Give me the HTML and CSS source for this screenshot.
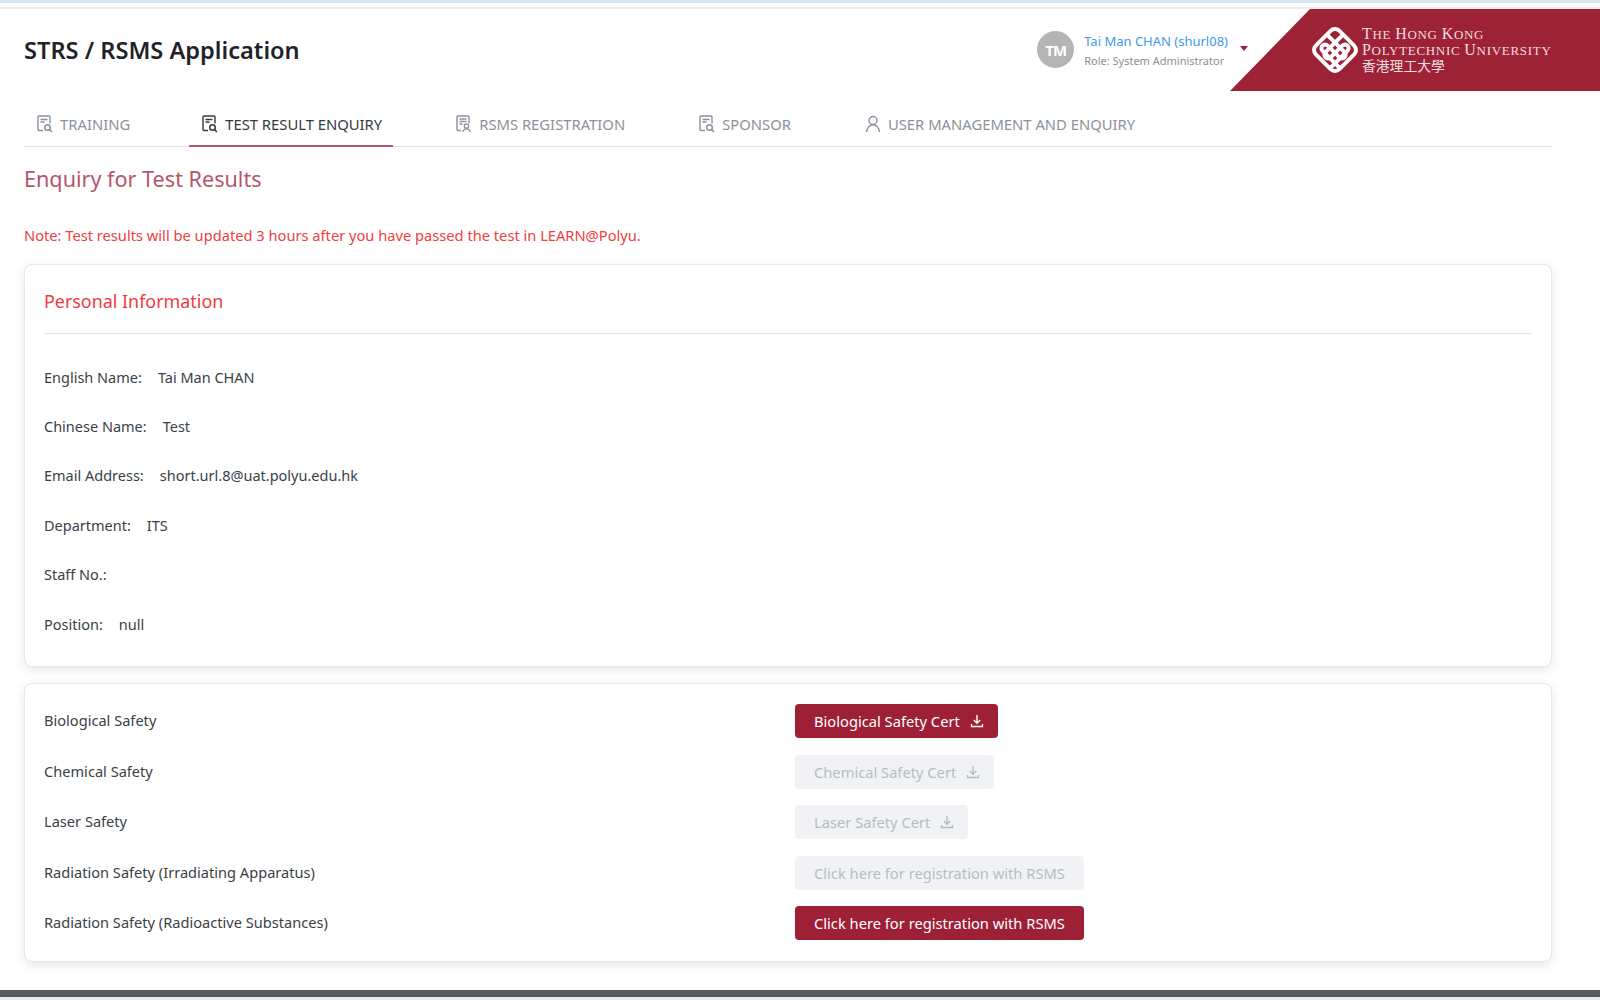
FILE: index.html
```html
<!DOCTYPE html>
<html lang="en">
<head>
    <meta charset="UTF-8">
    <title>STRS / RSMS Application</title>
    <link rel="stylesheet" href="styles.css">
</head>
<body>
    <svg class="icon-defs" width="0" height="0">
        <symbol id="doc-search" viewBox="0 0 16 18">
            <path d="M6 15.500H2a1 1 0 0 1-1-1V2a1 1 0 0 1 1-1h10a1 1 0 0 1 1 1v6.500" fill="none" stroke="currentColor" stroke-width="1.400"/>
            <path d="M3.500 4.500h7M3.500 7h4" fill="none" stroke="currentColor" stroke-width="1.400"/>
            <circle cx="10.500" cy="12.500" r="2.800" fill="none" stroke="currentColor" stroke-width="1.500"/>
            <path d="M12.600 14.600l2.400 2.400" fill="none" stroke="currentColor" stroke-width="1.500"/>
        </symbol>
        <symbol id="doc-user" viewBox="0 0 16 18">
            <path d="M5 15.500H2a1 1 0 0 1-1-1V2a1 1 0 0 1 1-1h10a1 1 0 0 1 1 1v6.500" fill="none" stroke="currentColor" stroke-width="1.400"/>
            <path d="M3.500 4h7M3.500 6.500h7M3.500 9h3" fill="none" stroke="currentColor" stroke-width="1.400"/>
            <circle cx="10.500" cy="11" r="2.200" fill="none" stroke="currentColor" stroke-width="1.300"/>
            <path d="M6.800 17c.3-2 1.800-3.200 3.700-3.200s3.400 1.200 3.700 3.200" fill="none" stroke="currentColor" stroke-width="1.300"/>
        </symbol>
        <symbol id="user" viewBox="0 0 16 18">
            <circle cx="8" cy="5.500" r="4" fill="none" stroke="currentColor" stroke-width="1.400"/>
            <path d="M1.500 17c.4-4 3-7.200 6.500-7.200s6.100 3.200 6.500 7.200" fill="none" stroke="currentColor" stroke-width="1.400"/>
        </symbol>
        <symbol id="download" viewBox="0 0 14 14">
            <path d="M7 1v8M3.800 6l3.200 3.200L10.200 6M1.500 10v2.500h11V10" fill="none" stroke="currentColor" stroke-width="1.400"/>
        </symbol>
    </svg>

    <div class="top-band"></div>

    <div class="page">
        <header class="app-header">
            <h1 class="app-title">STRS / RSMS Application</h1>
            <div class="user-box">
                <div class="avatar">TM</div>
                <div class="user-info">
                    <div class="user-name">Tai Man CHAN (shurl08)</div>
                    <div class="user-role">Role: System Administrator</div>
                </div>
                <span class="caret"></span>
            </div>
            <div class="brand">
                <svg class="brand-mark" viewBox="0 0 48 48">
                    <g fill="none" stroke="#fff" stroke-width="3.800" transform="rotate(45 24 24)">
                        <rect x="8" y="8" width="32" height="32" rx="6"/>
                        <path d="M8 19h24a3.500 3.500 0 0 1 0 7H16a3.500 3.500 0 0 0 0 7h24"/>
                        <path d="M19 8v24a3.500 3.500 0 0 0 7 0V16a3.500 3.500 0 0 1 7 0v24"/>
                    </g>
                </svg>
                <div class="brand-text">
                    <div><span class="brand-cap">T</span>HE <span class="brand-cap">H</span>ONG <span class="brand-cap">K</span>ONG</div>
                    <div><span class="brand-cap">P</span>OLYTECHNIC <span class="brand-cap">U</span>NIVERSITY</div>
                    <div class="brand-cjk">香港理工大學</div>
                </div>
            </div>
        </header>

        <nav class="tabs">
            <a class="tab"><svg class="tab-icon"><use href="#doc-search"/></svg>TRAINING</a>
            <a class="tab tab-active"><svg class="tab-icon"><use href="#doc-search"/></svg>TEST RESULT ENQUIRY</a>
            <a class="tab"><svg class="tab-icon"><use href="#doc-user"/></svg>RSMS REGISTRATION</a>
            <a class="tab"><svg class="tab-icon"><use href="#doc-search"/></svg>SPONSOR</a>
            <a class="tab"><svg class="tab-icon"><use href="#user"/></svg>USER MANAGEMENT AND ENQUIRY</a>
        </nav>

        <h2 class="page-title">Enquiry for Test Results</h2>
        <p class="note">Note: Test results will be updated 3 hours after you have passed the test in LEARN@Polyu.</p>

        <section class="card card-info">
            <h3 class="card-title">Personal Information</h3>
            <div class="info-list">
                <div class="info-row"><span class="info-label">English Name:</span><span>Tai Man CHAN</span></div>
                <div class="info-row"><span class="info-label">Chinese Name:</span><span>Test</span></div>
                <div class="info-row"><span class="info-label">Email Address:</span><span>short.url.8@uat.polyu.edu.hk</span></div>
                <div class="info-row"><span class="info-label">Department:</span><span>ITS</span></div>
                <div class="info-row"><span class="info-label">Staff No.:</span></div>
                <div class="info-row"><span class="info-label">Position:</span><span>null</span></div>
            </div>
        </section>

        <section class="card card-certs">
            <div class="cert-label">Biological Safety</div>
            <div><button class="btn">Biological Safety Cert<svg class="btn-icon"><use href="#download"/></svg></button></div>
            <div class="cert-label">Chemical Safety</div>
            <div><button class="btn btn-disabled">Chemical Safety Cert<svg class="btn-icon"><use href="#download"/></svg></button></div>
            <div class="cert-label">Laser Safety</div>
            <div><button class="btn btn-disabled">Laser Safety Cert<svg class="btn-icon"><use href="#download"/></svg></button></div>
            <div class="cert-label">Radiation Safety (Irradiating Apparatus)</div>
            <div><button class="btn btn-disabled">Click here for registration with RSMS</button></div>
            <div class="cert-label">Radiation Safety (Radioactive Substances)</div>
            <div><button class="btn">Click here for registration with RSMS</button></div>
        </section>
    </div>

    <div class="bottom-bar"></div>
    <div class="bottom-band"></div>
</body>
</html>
```

FILE: styles.css
```css
* {
    margin: 0;
    padding: 0;
    box-sizing: border-box;
}

html, body {
    height: 1000px;
    overflow: hidden;
}

body {
    font-family: "Noto Sans", "Open Sans", sans-serif;
    background: #fff;
    color: #333;
    font-size: 14.5px;
    display: flex;
    flex-direction: column;
}

.icon-defs {
    position: absolute;
}

.top-band {
    height: 3px;
    background: #d6e5f0;
    flex: none;
}

.page {
    flex: 1;
    margin-top: 4px;
    border-top: 2px solid #ececec;
    padding-left: 24px;
}

/* header */
.app-header {
    display: flex;
    align-items: center;
    height: 82px;
}

.app-title {
    font-size: 23.6px;
    font-weight: 600;
    color: #1f2329;
    flex: 1;
    margin-top: -1px;
}

.user-box {
    display: flex;
    align-items: center;
    margin-right: -18px;
    margin-top: -1px;
}

.avatar {
    width: 37px;
    height: 37px;
    border-radius: 50%;
    background: #b4b4b4;
    color: #fff;
    font-size: 15px;
    font-weight: 700;
    letter-spacing: -1px;
    display: flex;
    align-items: center;
    justify-content: center;
    margin-right: 10px;
}

.user-info {
    padding-top: 1px;
}

.user-name {
    color: #3d9be9;
    font-size: 13px;
    line-height: 18px;
}

.user-role {
    color: #8a8f96;
    font-size: 11px;
    line-height: 15px;
    margin-top: 3px;
}

.caret {
    width: 0;
    height: 0;
    border-left: 4.5px solid transparent;
    border-right: 4.5px solid transparent;
    border-top: 5px solid #a02137;
    margin-left: 12px;
    margin-top: -2px;
}

.brand {
    width: 370px;
    height: 82px;
    background: #9e2236;
    clip-path: polygon(80px 0, 100% 0, 100% 100%, 0 100%);
    display: flex;
    align-items: center;
    padding-left: 80px;
    color: #f1dde1;
}

.brand-mark {
    width: 50px;
    height: 50px;
    flex: none;
    margin-right: 2px;
}

.brand-text {
    font-family: "Liberation Serif", serif;
    font-size: 13px;
    letter-spacing: 0.7px;
    line-height: 14.5px;
    white-space: nowrap;
}

.brand-cap {
    font-size: 16px;
}

.brand-cjk {
    font-family: "Noto Sans CJK TC", sans-serif;
    font-size: 13.8px;
    letter-spacing: 0;
    line-height: 15px;
}

/* tabs */
.tabs {
    display: flex;
    margin-right: 48px;
    margin-top: 10px;
    border-bottom: 1px solid #e4e5ea;
    height: 46px;
}

.tab {
    display: flex;
    align-items: center;
    height: 46px;
    padding: 0 11px 0 13px;
    margin-right: 50px;
    color: #8b929c;
    font-size: 14.8px;
}

.tab:first-child {
    padding-left: 13px;
    margin-right: 48px;
}

.tab-active {
    color: #333a42;
    box-shadow: inset 0 -2px 0 #b4586a;
}

.tab-icon {
    width: 16px;
    height: 18px;
    margin-right: 7px;
}

/* content */
.page-title {
    font-size: 21.6px;
    font-weight: 400;
    color: #b5566a;
    margin-top: 16px;
    line-height: 32px;
}

.note {
    color: #ee4040;
    font-size: 14.67px;
    line-height: 20px;
    margin-top: 30px;
}

.card {
    margin-right: 48px;
    border: 1px solid #e6e7ee;
    border-radius: 8px;
    background: #fff;
    box-shadow: 0 3px 10px rgba(60, 70, 90, 0.13);
}

.card-info {
    margin-top: 19px;
    height: 403px;
    padding: 21px 19px 0;
}

.card-title {
    font-size: 17.9px;
    font-weight: 400;
    color: #ee3b42;
    line-height: 30px;
    padding-bottom: 17px;
    border-bottom: 1px solid #e4e5ea;
}

.info-list {
    margin-top: 18px;
}

.info-row {
    display: flex;
    height: 49.4px;
    align-items: center;
    color: #3a3f46;
}

.info-label {
    margin-right: 16px;
}

.card-certs {
    margin-top: 16px;
    height: 279px;
    padding: 20px 19px 0;
    display: grid;
    grid-template-columns: 751px 1fr;
    grid-auto-rows: 50.5px;
    align-items: start;
    font-size: 14.6px;
}

.cert-label {
    line-height: 32px;
    color: #3a3f46;
}

.btn {
    display: inline-flex;
    align-items: center;
    height: 34px;
    padding: 0 19px;
    border: none;
    border-radius: 4px;
    background: #9e2036;
    color: #fff;
    font-family: inherit;
    font-size: 14.7px;
}

.btn-disabled {
    background: #f1f2f5;
    color: #b7bcc4;
}

.btn-icon {
    width: 14px;
    height: 14px;
    margin-left: 10px;
    margin-right: -5px;
}

.bottom-bar {
    height: 7px;
    background: #5a5a5a;
    flex: none;
}

.bottom-band {
    height: 3px;
    background: #e3edf3;
    flex: none;
}
```
